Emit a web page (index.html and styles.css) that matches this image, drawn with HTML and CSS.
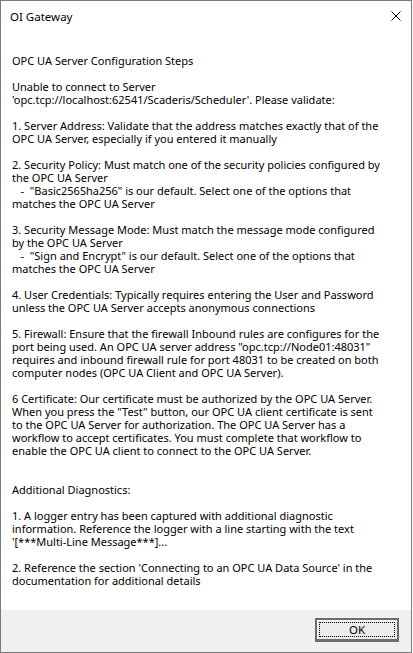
FILE: index.html
```html
<!DOCTYPE html>
<html>
<head>
<meta charset="utf-8">
<link rel="stylesheet" href="styles.css">
</head>
<body>
<div class="window">
  <div class="titlebar">
    <span class="title">OI Gateway</span>
    <svg class="close" width="10" height="10" viewBox="0 0 10 10"><path d="M0.5 0.5 L9.5 9.5 M9.5 0.5 L0.5 9.5" stroke="#000" stroke-width="1" fill="none"/></svg>
  </div>
  <div class="content">
<p class="line">OPC UA Server Configuration Steps</p>
<p class="line"> </p>
<p class="line">Unable to connect to Server</p>
<p class="line">'opc.tcp://localhost:62541/Scaderis/Scheduler'. Please validate:</p>
<p class="line"> </p>
<p class="line">1. Server Address: Validate that the address matches exactly that of the</p>
<p class="line">OPC UA Server, especially if you entered it manually</p>
<p class="line"> </p>
<p class="line">2. Security Policy: Must match one of the security policies configured by</p>
<p class="line">the OPC UA Server</p>
<p class="line">   -  "Basic256Sha256" is our default. Select one of the options that</p>
<p class="line">matches the OPC UA Server</p>
<p class="line"> </p>
<p class="line">3. Security Message Mode: Must match the message mode configured</p>
<p class="line">by the OPC UA Server</p>
<p class="line">   -  "Sign and Encrypt" is our default. Select one of the options that</p>
<p class="line">matches the OPC UA Server</p>
<p class="line"> </p>
<p class="line">4. User Credentials: Typically requires entering the User and Password</p>
<p class="line">unless the OPC UA Server accepts anonymous connections</p>
<p class="line"> </p>
<p class="line">5. Firewall: Ensure that the firewall Inbound rules are configures for the</p>
<p class="line">port being used. An OPC UA server address "opc.tcp://Node01:48031"</p>
<p class="line">requires and inbound firewall rule for port 48031 to be created on both</p>
<p class="line">computer nodes (OPC UA Client and OPC UA Server).</p>
<p class="line"> </p>
<p class="line">6 Certificate: Our certificate must be authorized by the OPC UA Server.</p>
<p class="line">When you press the "Test" button, our OPC UA client certificate is sent</p>
<p class="line">to the OPC UA Server for authorization. The OPC UA Server has a</p>
<p class="line">workflow to accept certificates. You must complete that workflow to</p>
<p class="line">enable the OPC UA client to connect to the OPC UA Server.</p>
<p class="line"> </p>
<p class="line"> </p>
<p class="line">Additional Diagnostics:</p>
<p class="line"> </p>
<p class="line">1. A logger entry has been captured with additional diagnostic</p>
<p class="line">information. Reference the logger with a line starting with the text</p>
<p class="line">'[***Multi-Line Message***]...</p>
<p class="line"> </p>
<p class="line">2. Reference the section 'Connecting to an OPC UA Data Source' in the</p>
<p class="line">documentation for additional details</p>
  </div>
  <div class="footer">
    <button class="ok"><span class="focus">OK</span></button>
  </div>
</div>
</body>
</html>
```

FILE: styles.css
```css
html, body {
  margin: 0;
  padding: 0;
  background: #ffffff;
}
.window {
  box-sizing: border-box;
  width: 412px;
  height: 653px;
  border: 1px solid #7a7a7a;
  display: flex;
  flex-direction: column;
  background: #ffffff;
  font-family: "Noto Sans", "Open Sans", sans-serif;
  font-size: 11px;
  color: #000;
}
.titlebar {
  height: 31px;
  display: flex;
  align-items: center;
  justify-content: space-between;
  padding: 0 10px 0 9px;
  flex: none;
}
.title {
  font-size: 11.5px;
  margin-top: -1px;
}
.close {
  margin-top: -2px;
}
.content {
  flex: 1;
  padding: 22px 0 0 11px;
}
.line {
  margin: 0;
  height: 13px;
  line-height: 13px;
  white-space: pre;
}
.footer {
  flex: none;
  height: 42px;
  background: #f0f0f0;
  display: flex;
  justify-content: flex-end;
  align-items: flex-start;
  padding: 8px 12px 0 0;
  box-sizing: border-box;
}
.ok {
  box-sizing: border-box;
  width: 84px;
  height: 24px;
  margin: 0;
  padding: 2px;
  border: 2px solid #6d6d6d;
  border-right-width: 2px;
  border-bottom-width: 3px;
  background: #ececec;
  box-shadow: inset 1px 1px 0 #fbfbfb;
  font-family: "Noto Sans", "Open Sans", sans-serif;
  font-size: 11.5px;
  color: #000;
  display: flex;
}
.focus {
  flex: 1;
  border: 1px dotted #000;
  display: flex;
  align-items: center;
  justify-content: center;
  line-height: 12px;
}
```
